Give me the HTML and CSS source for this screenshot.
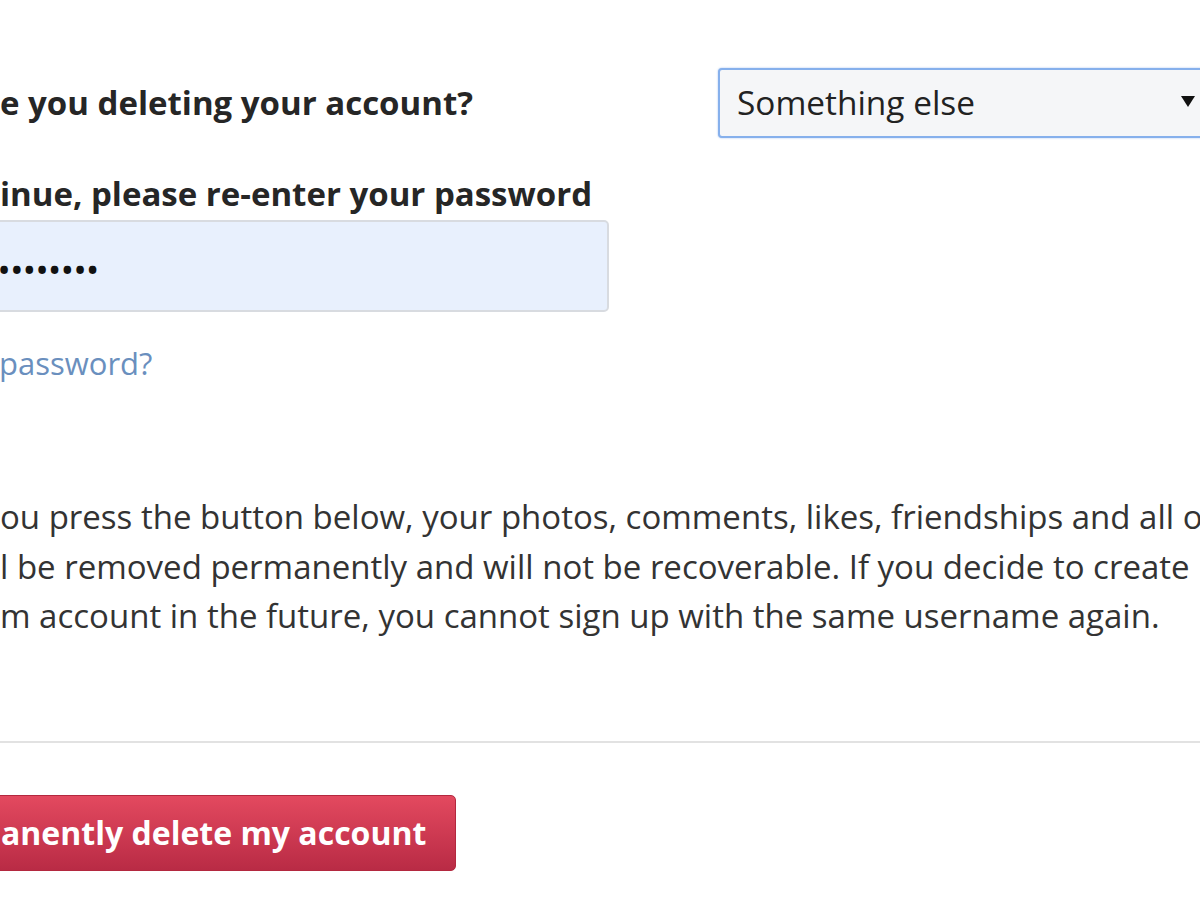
FILE: index.html
```html
<!DOCTYPE html>
<html lang="en">
<head>
<meta charset="utf-8">
<title>Delete Your Account</title>
<link rel="stylesheet" href="styles.css">
</head>
<body>
<main class="page">
  <div class="reason-row">
    <label class="label reason-label">e you deleting your account?</label>
    <div class="select">
      <span class="select-value">Something else</span>
      <span class="select-arrow"></span>
    </div>
  </div>
  <label class="label pw-label">inue, please re-enter your password</label>
  <div class="pw-input"><span class="dots">••••••••</span></div>
  <a class="forgot" href="#">password?</a>
  <p class="notice">
    <span class="line">ou press the button below, your photos, comments, likes, friendships and all o</span>
    <span class="line">l be removed permanently and will not be recoverable. If you decide to create</span>
    <span class="line">m account in the future, you cannot sign up with the same username again.</span>
  </p>
  <hr class="divider">
  <button class="delete-btn">anently delete my account</button>
</main>
</body>
</html>
```
FILE: styles.css
```css
html, body {
  margin: 0;
  padding: 0;
  background: #ffffff;
  overflow: hidden;
  width: 1200px;
  height: 900px;
}
.page {
  font-family: "Open Sans", "Noto Sans", sans-serif;
  color: #262626;
  display: flex;
  flex-direction: column;
  align-items: flex-start;
  padding-top: 68px;
  width: 1200px;
  white-space: nowrap;
}
.reason-row {
  display: grid;
  grid-template-columns: 718px 500px;
  align-items: center;
  width: 1200px;
}
.label {
  font-weight: 700;
  font-size: 33px;
  color: #262626;
  letter-spacing: 0;
}
.reason-label {
  margin-top: -2px;
}
.select {
  box-sizing: border-box;
  height: 70px;
  border: 2px solid #86b0ec;
  border-radius: 4px;
  background: #f5f6f8;
  display: flex;
  align-items: center;
  justify-content: space-between;
  padding-left: 17px;
  padding-right: 21px;
  width: 500px;
  box-shadow: 0 0 2px rgba(100, 150, 230, 0.6);
}
.select-value {
  font-size: 33.4px;
  color: #222;
  margin-top: -2px;
}
.select-arrow {
  width: 0;
  height: 0;
  border-left: 7.5px solid transparent;
  border-right: 7.5px solid transparent;
  border-top: 11px solid #111;
  margin-top: -4px;
}
.pw-label {
  margin-top: 36px;
  line-height: 40px;
}
.pw-input {
  box-sizing: border-box;
  margin-top: 6px;
  width: 619px;
  height: 92px;
  margin-left: -10px;
  background: #e8f0fd;
  border: 2px solid #d8dbe0;
  border-radius: 5px;
  display: flex;
  align-items: center;
  padding-left: 7px;
}
.dots {
  font-size: 27px;
  font-weight: 700;
  letter-spacing: 2.5px;
  color: #111;
  margin-top: 6px;
}
.forgot {
  margin-top: 31px;
  margin-left: -1px;
  font-size: 31px;
  color: #6a8fbe;
  text-decoration: none;
  line-height: 40px;
}
.notice {
  margin: 109px 0 0 0;
  font-size: 33px;
  line-height: 49.5px;
  color: #333;
  display: flex;
  flex-direction: column;
}
.divider {
  margin: 100px 0 0 0;
  width: 1200px;
  border: 0;
  border-top: 2px solid #e2e2e2;
  height: 0;
}
.delete-btn {
  margin-top: 52px;
  margin-left: -20px;
  box-sizing: border-box;
  height: 76px;
  width: 476px;
  padding: 0 0 0 20px;
  text-align: left;
  font-family: "Open Sans", "Noto Sans", sans-serif;
  font-weight: 700;
  font-size: 32px;
  color: #ffffff;
  background: linear-gradient(#e3495f, #b92b45);
  border: 1px solid #b3283f;
  border-radius: 5px;
}
```
